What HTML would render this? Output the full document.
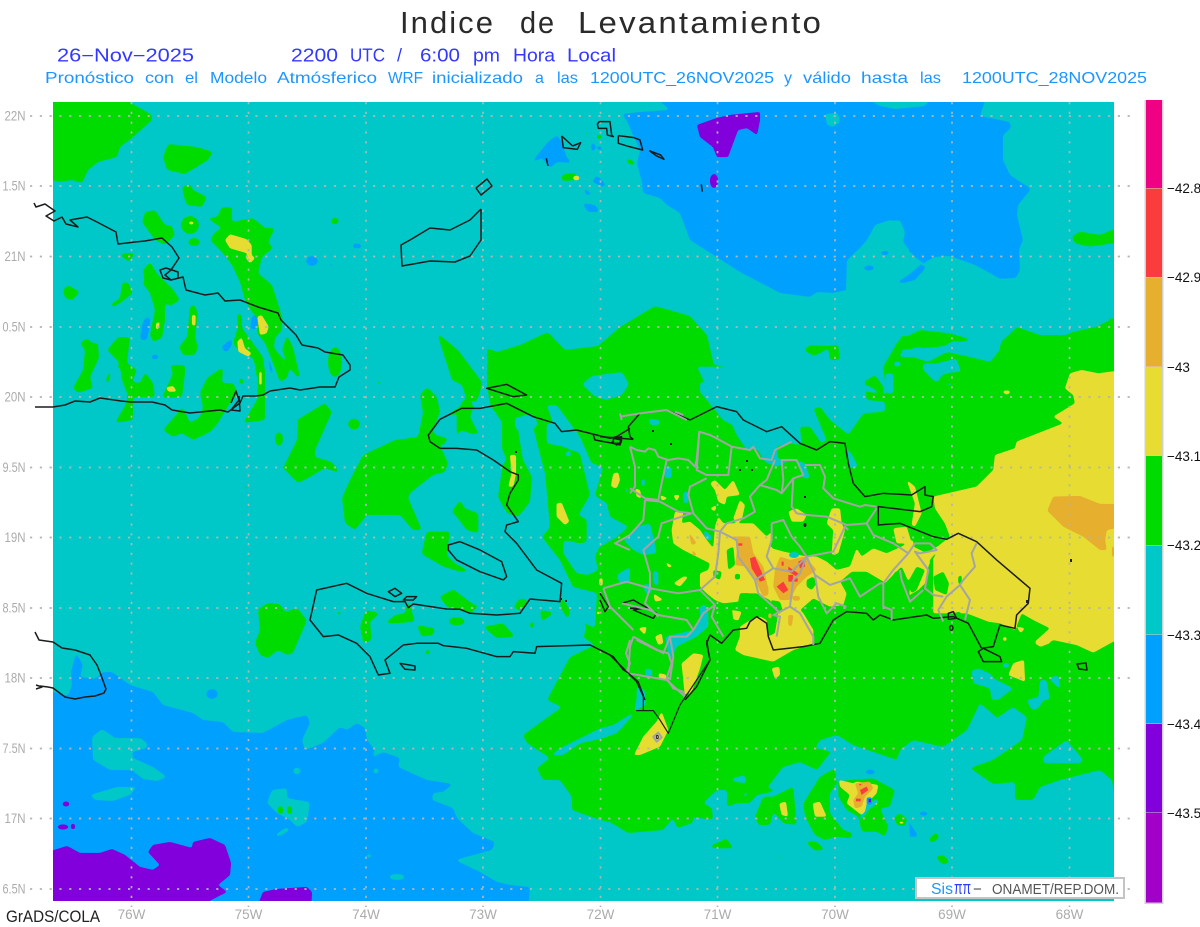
<!DOCTYPE html>
<html><head><meta charset="utf-8"><title>Indice de Levantamiento</title>
<style>
html,body{margin:0;padding:0;background:#fff;width:1200px;height:927px;overflow:hidden}
svg{display:block}
text{font-family:"Liberation Sans",sans-serif;white-space:pre}
.ax{font-size:13.5px;fill:#ababab}
.cb{font-size:13.5px;fill:#111}
.ns{vector-effect:non-scaling-stroke}
</style></head><body>
<svg width="1200" height="927" viewBox="0 0 1200 927" xmlns="http://www.w3.org/2000/svg">
<defs><clipPath id="p"><rect x="53" y="102" width="1061" height="799"/></clipPath>
<filter id="s" filterUnits="userSpaceOnUse" x="0" y="60" width="1200" height="880" color-interpolation-filters="sRGB"><feGaussianBlur stdDeviation="1.7"/><feComponentTransfer><feFuncA type="linear" slope="7" intercept="-3"/></feComponentTransfer></filter>
<filter id="t" filterUnits="userSpaceOnUse" x="0" y="60" width="1200" height="880" color-interpolation-filters="sRGB"><feGaussianBlur stdDeviation="1"/><feComponentTransfer><feFuncA type="linear" slope="6" intercept="-2.3"/></feComponentTransfer></filter>
</defs>
<rect width="1200" height="927" fill="#fff"/>
<g clip-path="url(#p)">
<rect x="53" y="102" width="1061" height="799" fill="#00c8c8"/>

<!-- blue -->
<g fill="#00a0ff" filter="url(#s)">
<polygon points="653,95 670,110 640,112 622,114 628,123 632,133 640,150 637,163 642,183 643,193 660,198 667,205 680,213 690,240 740,272 780,293 810,297 817,292 833,293 847,290 847,260 860,248 867,240 875,225 885,222 900,220 905,232 903,242 913,255 925,265 917,268 900,282 915,278 925,270 925,262 935,257 950,256 975,265 988,272 1000,279 1016,278 1020,270 1019,250 1023,240 1017,215 1018,205 1031,189 1010,175 1003,160 1003,135 1011,128 1010,122 980,116 987,95"/>
<polygon points="531,163 547,143 557,135 562,143 567,158 573,163 557,162 550,168 542,158"/>
<polygon points="597,175 606,185 603,187 592,182"/><polygon points="583,187 593,195 586,195"/><polygon points="582,203 595,205 600,212 588,212"/>
<polygon points="597,145 606,150 597,150"/><ellipse cx="593" cy="147" rx="2" ry="5"/>
<polygon points="45,690 68,696 72,685 71,672 76,653 83,665 80,677 95,679 103,672 112,672 130,685 153,692 163,705 193,713 203,720 223,722 233,732 263,733 287,720 307,715 310,723 302,740 305,750 323,743 340,727 347,730 357,723 365,728 367,740 375,750 372,758 383,752 400,758 398,767 427,780 453,784 443,792 433,793 432,800 453,808 457,818 473,833 495,842 492,850 455,860 480,872 497,882 510,885 530,887 528,910 45,910"/>
<ellipse cx="212" cy="694" rx="6" ry="5"/>
<ellipse cx="312" cy="261" rx="6" ry="5"/><ellipse cx="357" cy="246" rx="5" ry="2.5"/><ellipse cx="331" cy="265" rx="2" ry="2"/>
<polygon points="145,318 150,317 150,325 147,340 140,340 142,325"/><polygon points="230,340 231,328 232,345 226,353 221,347"/>
<polygon points="267,313 252,316 250,328 255,330"/><polygon points="267,355 270,360 274,375 270,372"/><ellipse cx="155" cy="357" rx="4" ry="2.5"/>
</g>

<!-- cyan over blue -->
<g fill="#00c8c8" filter="url(#s)">
<polygon points="860,95 933,95 925,106 895,109 880,106"/>
<polygon points="825,114 838,113 840,122 833,127 827,125"/>
<polygon points="847,260 868,248 875,225 890,220 898,222 905,235 902,240 903,245 902,250 917,262 907,273 895,282 900,283 917,280 925,268 935,257 950,256 952,260 975,265 1000,279 1016,278 1020,290 900,295 840,300 846,290"/>
<polygon points="92,737 102,729 115,738 140,738 147,743 147,748 132,752 133,758 153,767 167,777 157,781 143,779 132,770 110,770 93,760"/>
<polygon points="90,795 117,787 137,787 130,795 113,801 95,800"/>
<polygon points="267,803 272,790 287,788 287,798 297,800 310,802 307,822 297,827 290,820 277,813"/>
<polygon points="275,835 287,827 290,830 278,837"/>
<ellipse cx="397" cy="877" rx="8" ry="3"/><ellipse cx="297" cy="771" rx="4" ry="3.5"/><ellipse cx="376" cy="771" rx="3" ry="3"/><ellipse cx="369" cy="856" rx="3" ry="2"/>
</g>
<g fill="#00a0ff" filter="url(#t)"><ellipse cx="885" cy="253" rx="4" ry="2"/><ellipse cx="869" cy="268" rx="5" ry="2.5"/><polygon points="910,248 918,250 908,253"/><polygon points="903,283 898,282 913,272 921,264 925,268 915,280"/></g>

<!-- purple -->
<g fill="#8200dc" filter="url(#t)">
<polygon points="697,125 717,118 730,115 760,112 760,120 757,135 747,128 738,130 728,157 717,157 713,147 700,137"/>
<ellipse cx="714" cy="181" rx="4" ry="7"/>
<polygon points="45,853 67,846 80,853 100,853 112,849 125,855 140,867 153,870 160,865 148,852 153,845 170,842 192,848 193,842 210,838 225,845 231,863 230,875 218,885 227,892 217,897 193,910 45,910"/>
<polygon points="256,910 263,892 277,889 307,887 312,892 311,910"/>
<ellipse cx="66" cy="804" rx="3.5" ry="2.5"/><ellipse cx="63" cy="827" rx="5.5" ry="2.5"/><rect x="71" y="824" width="4" height="5"/>
</g>

<!-- green -->
<g fill="#00dc00" filter="url(#s)">
<polygon id="main" points="487,348 497,352 520,345 548,332 565,350 598,346 620,327 655,306 690,316 707,335 714,365 887,395 883,367 897,343 905,333 908,322 927,322 937,332 952,332 960,333 977,343 953,341 943,347 930,349 917,347 900,353 900,357 913,357 928,362 947,352 970,357 990,362 1000,350 1000,343 1017,327 1040,335 1067,335 1083,325 1113,318 1125,318 1125,800 1114,795 1112,780 1100,770 1060,780 1040,787 1033,800 1015,800 1015,782 993,784 970,768 993,760 1022,740 1027,717 1013,707 997,718 980,703 967,730 943,747 913,740 900,750 897,760 853,745 837,735 820,740 815,748 833,752 845,753 830,753 817,770 800,762 783,767 767,788 777,790 767,793 757,795 750,803 737,803 727,807 727,790 717,790 703,803 712,808 713,820 693,817 693,823 677,828 673,818 663,830 628,833 610,822 600,820 572,810 572,797 560,780 543,780 537,768 550,758 527,743 523,735 562,707 547,700 563,670 570,657 595,645 583,637 595,627 597,593 573,587 560,560 542,537 550,527 545,473 533,427 518,430 523,460 532,477 530,502 518,517 507,513 498,497 502,470 502,422 490,405 487,385"/>
<polygon points="437,333 458,350 482,382 478,402 470,400 476,435 460,430 458,438 458,420 470,410 462,385 452,380"/>
<polygon points="45,95 117,95 152,115 152,120 132,138 120,147 117,157 98,162 88,170 82,183 72,180 58,182 45,177"/>
<polygon points="163,157 168,144 197,147 213,152 208,160 185,174 167,170"/>
<polygon points="182,187 190,184 193,190 207,197 202,207 187,205 184,197"/>
<ellipse cx="190" cy="225" rx="9" ry="9"/><ellipse cx="194" cy="242" rx="6" ry="4"/>
<polygon points="207,218 217,217 222,207 232,207 232,222 253,218 265,228 275,228 268,242 273,248 262,257 258,273 272,285 280,310 283,320 275,338 270,338 265,326 252,312 245,300 240,282 232,265 222,252 210,240 215,232 222,228"/>
<ellipse cx="335" cy="221" rx="4" ry="3.5"/>
<polygon points="145,212 155,210 165,225 172,226 175,235 165,245 155,240 142,222"/>
<polygon points="125,253 135,253 129,262 120,255"/><polygon points="143,270 150,262 158,275 172,288 180,300 170,306 158,297 145,285"/>
<g transform="translate(500 100) scale(.3333)"><polygon points="185,225 222,218 230,225 235,240 185,243"/><rect x="252" y="96" width="16" height="8" rx="4"/><ellipse cx="298" cy="110" rx="9" ry="8"/><polygon points="378,175 395,180 408,190 395,196 380,186"/><rect x="378" y="288" width="12" height="8"/></g>
<polygon points="63,290 68,285 80,292 72,300 65,298"/>
<polygon points="110,305 120,298 122,283 128,282 133,293 120,303 113,307"/>
<polygon points="140,280 158,293 165,300 165,320 162,338 153,342 150,335 155,310 150,293"/>
<polygon points="190,307 194,304 198,313 195,337 198,347 195,355 183,355 179,347 187,337"/>
<polygon points="80,343 87,338 92,343 98,343 99,358 90,377 93,388 78,393 73,388 83,370 85,350"/>
<polygon points="107,350 118,337 130,337 127,363 137,370 132,382 140,383 145,372 153,383 155,397 133,397 133,413 133,420 115,423 127,402 127,393 122,380 120,367 112,370 107,388 106,378 112,368 120,365 117,360"/>
<polygon points="162,397 170,380 173,373 170,365 185,365 185,373 182,397 167,398"/>
<polygon points="163,430 182,408 183,407 190,423 200,417 203,407 200,393 207,378 223,367 222,383 233,383 238,393 230,403 218,423 210,432 193,440 182,433 173,437"/>
<polygon points="238,380 243,377 243,387"/>
<polygon points="255,370 265,370 265,420 243,423 257,400 258,380"/>
<polygon points="237,313 242,315 242,328 263,357 265,373 257,373 253,358 238,350 233,343 238,327"/>
<polygon points="260,313 282,320 282,330 275,338 274,348 290,367 287,378 280,382 273,363 265,343 257,333 257,320"/>
<polygon points="287,335 293,347 300,377 298,378 290,368 282,350"/>
<ellipse cx="335" cy="362" rx="7" ry="15"/>
<polygon points="297,420 325,403 332,412 315,450 315,457 332,462 340,473 325,468 308,478 298,483 283,468 297,440 298,423"/>
<ellipse cx="354" cy="424" rx="6" ry="5.5"/><ellipse cx="279" cy="439" rx="4" ry="7"/><ellipse cx="246" cy="487" rx="3" ry="1.5"/>
<polygon points="342,498 350,480 363,455 395,440 418,437 423,413 420,395 427,387 437,397 440,412 433,430 448,463 445,472 433,475 410,493 408,498 422,530 413,530 400,515 367,515 355,530 345,523"/>
<polygon points="258,610 267,603 280,604 285,612 297,608 307,620 293,653 287,655 278,650 268,658 260,655 255,643 260,630"/>
<g transform="translate(280 380) scale(.3333)">
<polygon points="515,395 540,360 555,385 595,400 595,460 560,450 530,410"/>
<polygon points="425,520 440,455 510,455 500,525 525,550 570,575 540,575 490,560 430,525"/>
<polygon points="478,650 520,628 575,670 597,680 570,700 500,680"/><ellipse cx="530" cy="724" rx="25" ry="12"/>
<polygon points="410,735 465,745 460,765 425,770"/><polygon points="610,740 670,730 705,770 650,775"/>
<polygon points="700,680 720,655 745,660 720,695"/><polygon points="780,690 810,695 820,700 785,725"/><rect x="750" y="725" width="12" height="20" rx="5"/>
<polygon points="845,650 870,690 865,720 840,680"/><polygon points="258,690 300,700 270,725 275,780 250,790 240,740"/>
<polygon points="315,730 345,705 375,700 385,660 405,725 350,730"/><polygon points="435,810 455,810 440,830"/>
<rect x="170" y="695" width="14" height="10"/><rect x="205" y="735" width="10" height="8"/><polygon points="275,580 288,612 278,605"/>
<polygon points="465,165 505,175 490,195 465,190"/><polygon points="530,175 545,125 570,120 590,160 615,150 595,100 565,55 550,60 540,80 480,118 530,100"/>
<polygon points="288,0 310,8 295,15"/>
<polygon points="905,715 925,735 945,745 940,770 910,770 920,745"/>
</g>
<g transform="translate(780 100) scale(.3333)">
<polygon points="245,850 285,825 310,860 310,885 270,860"/>
<polygon points="72,750 90,735 135,738 175,735 180,780 150,780 145,745 110,765 95,765"/>
<polygon points="875,410 900,395 960,405 1030,375 1030,425 930,440 885,430"/><rect x="175" y="728" width="15" height="4"/><rect x="275" y="762" width="18" height="5"/>
</g>
<g transform="translate(500 640) scale(.3333)">
<polygon points="765,530 790,470 820,470 880,440 890,555 850,550 820,515 810,555 775,555"/>
<polygon points="910,490 960,410 1005,385 1010,430 990,460 990,520 1030,570 1060,580 1050,595 1010,590 975,600 945,585 915,530"/>
<polygon points="1015,425 1050,420 1120,415 1185,450 1170,500 1140,505 1165,560 1155,590 1130,575 1085,575 1075,530 1040,510 1015,470"/>
<polygon points="1182,530 1200,520 1222,535 1215,558 1190,555"/>
<polygon points="915,605 950,605 975,630 945,632"/><polygon points="605,632 625,635 620,645"/><polygon points="625,620 660,605 680,595 700,625 650,625"/>
<polygon points="825,645 845,650 850,660 835,655"/><rect x="855" y="660" width="15" height="6"/><rect x="880" y="672" width="17" height="6"/>
<polygon points="1285,600 1310,575 1318,595 1295,608"/><polygon points="1305,650 1330,645 1350,665 1330,675"/>
</g>
<rect x="278" y="806" width="5" height="8"/><rect x="287" y="806" width="5" height="8"/>
</g>

<!-- cyan holes in green -->
<g fill="#00c8c8" filter="url(#s)">
<g transform="translate(280 380) scale(.3333)">
<polygon points="800,75 830,75 900,170 935,250 970,260 945,345 985,410 1000,420 1000,470 960,495 945,530 955,570 925,585 890,580 850,520 850,480 900,490 950,480 960,440 895,405 930,345 900,220 850,200 800,190 800,130 820,130"/>
<polygon points="610,0 640,100 660,120 660,190 680,240 640,290 620,250 610,190 590,150 570,110 585,70 600,40"/>
<polygon points="510,120 528,125 525,145 510,140"/><polygon points="705,110 720,112 725,165 705,140"/><circle cx="865" cy="222" r="9"/>
<polygon points="755,100 775,130 750,160 720,150 720,110"/>
</g>
<polygon points="600,500 606,502 610,517 628,527 617,537 600,547"/>
<polygon points="582,384 592,376 606,374 622,372 629,384 622,395 606,400 594,396"/>
<polygon points="700,380 715,397 728,410 738,412 733,423 738,437 755,435 760,450 777,448 778,460 792,458 800,462 805,463 810,478 803,478 798,463 790,460 777,467 765,462 755,445 745,442 738,428 723,420 715,410 700,392"/>
<g transform="translate(600 380) scale(.3333)">
<polygon points="300,-40 345,50 385,95 415,160 465,165 480,210 530,205 535,240 575,235 600,245 615,250 630,295 610,295 595,250 570,240 530,240 480,205 440,210 410,165 380,95 340,60 290,-40"/>
<polygon points="300,-40 790,-40 800,60 855,65 855,95 790,100 745,165 740,160 690,120 660,80 640,85 680,180 665,190 630,140 600,140 605,195 570,190 530,200 480,210 415,160"/>
<polygon points="740,195 775,260 750,265"/>
<polygon points="855,-20 880,-20 880,40 860,40"/>
<polygon points="-40,360 -10,350 20,370 30,410 85,440 50,470 -10,505 -40,500"/><polygon points="110,440 150,430 165,490 170,520 130,525 100,510 70,480"/>
<polygon points="145,115 180,120 178,135 150,135"/><polygon points="190,260 215,260 215,295 195,295"/><polygon points="125,295 135,295 135,320 125,320"/>
<polygon points="245,290 255,290 255,305"/><polygon points="70,325 85,325 85,345"/><polygon points="250,335 265,335 265,370 250,370"/>
<polygon points="310,445 335,470 335,482 315,480"/><polygon points="160,570 175,575 175,620 160,610"/><polygon points="50,585 90,560 90,610 60,612"/><polygon points="130,610 155,615 155,640 135,640"/>
<polygon points="300,680 315,670 325,700 325,740 290,770 230,800 210,850 195,770 280,750 300,720"/>
<polygon points="110,920 135,930 135,980 110,980"/><polygon points="135,865 155,868 155,890 135,885"/>
<polygon points="1115,870 1140,865 1190,900 1240,925 1195,960 1175,960 1170,925 1120,910"/><polygon points="1320,900 1340,900 1350,960 1315,960"/><ellipse cx="1218" cy="856" rx="12" ry="6"/>
</g>
<g transform="translate(780 100) scale(.3333)">
<polygon points="430,790 460,790 480,840 465,845 430,810"/><polygon points="490,790 525,778 545,815 495,820"/><ellipse cx="352" cy="792" rx="12" ry="8"/><ellipse cx="507" cy="853" rx="12" ry="4"/><polygon points="315,840 332,830 340,880 315,875"/>
</g>
<g transform="translate(500 640) scale(.3333)">
<polygon points="135,348 190,345 240,310 300,297 350,280 400,225 415,150 420,205 340,255 300,265 230,300 180,325 150,348"/>
<polygon points="695,415 735,405 740,430 700,425"/><polygon points="725,470 745,450 745,460 735,472"/>
<polygon points="1075,550 1090,495 1135,475 1135,490 1110,505 1095,525"/><polygon points="438,85 458,88 455,112 440,110"/>
</g>
<g transform="translate(900 320) scale(.3333)">
<polygon points="430,1310 500,1260 550,1320 540,1330 430,1330"/><polygon points="445,1075 475,1065 482,1110"/><polygon points="380,1140 420,1130 425,1080 445,1120 415,1165 395,1170"/>
<polygon points="0,-10 150,-10 600,-10 640,-5 590,20 500,40 420,45 350,20 310,50 300,80 270,125 210,80 160,65 130,90 70,120 -10,90 60,85 120,80 180,65 220,60 150,40 60,30 20,50 -10,45"/>
<polygon points="65,140 110,130 170,115 180,150 125,165 115,185 80,160"/><polygon points="140,190 160,190 155,198"/><ellipse cx="318" cy="1036" rx="10" ry="8"/>
<polygon points="240,1050 215,1065 225,1090 270,1100 290,1135 345,1105 300,1100 270,1060"/>
</g>
</g>

<!-- yellow -->
<g fill="#e6dc32" filter="url(#t)">
<g transform="translate(900 320) scale(.3333)">
<polygon points="670,150 595,160 545,150 510,160 495,205 520,225 525,250 460,290 490,310 350,365 345,385 285,405 280,450 230,500 100,530 105,565 135,610 150,650 100,690 100,880 200,880 265,905 300,910 345,930 365,880 400,900 450,925 405,965 425,980 460,960 530,975 580,998 640,965 670,950"/>
<polygon points="350,1040 372,1020 375,1085 350,1075 325,1065"/><polygon points="310,212 332,215 320,225"/><ellipse cx="314" cy="957" rx="5" ry="6"/><polygon points="350,920 375,925 362,940"/>
</g>
<g transform="translate(600 380) scale(.3333)">
<polygon points="215,450 225,395 250,395 245,430 270,425 300,450 320,480 340,505 345,440 355,410 370,430 410,430 460,430 500,470 515,455 515,505 550,515 620,530 650,530 680,545 710,570 750,560 770,505 785,530 820,505 860,520 905,500 940,480 940,500 980,520 1010,500 985,560 975,610 955,630 920,650 905,600 890,570 860,610 800,575 755,575 720,605 740,640 730,675 690,680 640,655 600,690 610,700 640,750 640,790 580,810 520,845 430,825 405,810 420,770 420,740 460,715 480,710 500,720 505,770 525,760 535,700 510,660 470,640 430,640 415,665 370,670 345,660 320,640 300,620 300,580 325,570 330,550 290,530 250,510 220,490"/>
<polygon points="330,310 345,300 375,330 400,300 420,345 380,350 375,375 355,365 345,330"/>
<polygon points="400,415 420,360 435,375 425,420 410,430"/>
<polygon points="35,315 50,280 60,300 50,325"/><polygon points="105,325 120,330 125,355 110,350"/>
<polygon points="180,345 205,355 185,362"/><polygon points="220,345 240,345 230,365"/>
<polygon points="565,395 590,385 620,405 610,425 575,425"/>
<polygon points="695,385 720,385 725,430 735,450 715,520 695,525 700,450 680,430"/>
<polygon points="920,300 945,320 965,400 945,440 935,435 945,370"/><polygon points="880,445 920,440 935,490 890,490"/>
<polygon points="392,690 425,695 415,722 400,718"/><polygon points="515,865 538,860 540,885 525,897"/>
<rect x="1210" y="32" width="20" height="9" rx="4"/>
<polygon points="1240,850 1270,840 1275,905 1225,885"/><polygon points="1305,790 1350,755 1350,790 1320,800"/>
<polygon points="165,770 185,760 190,790 175,795"/><polygon points="115,745 140,740 135,765"/><polygon points="160,640 190,660 165,665"/>
<polygon points="250,590 265,590 240,620 220,610"/><polygon points="195,545 220,560 205,562"/><polygon points="330,385 350,375 345,395"/>
<polygon points="245,850 270,845 280,820 310,825 285,890 255,950"/><polygon points="175,880 200,885 195,900"/>
<rect x="1210" y="772" width="10" height="10"/>
</g>
<g transform="translate(280 380) scale(.3333)">
<polygon points="690,225 708,225 708,280 700,320 685,320 695,280"/><polygon points="830,370 845,368 868,425 855,435 830,410"/><polygon points="1000,280 1015,277 1020,300 1005,325 993,318"/><rect x="958" y="595" width="10" height="22"/><rect x="950" y="695" width="10" height="8"/>
</g>
<g transform="translate(30 280) scale(.3333)">
<polygon points="682,110 695,105 716,140 710,160 690,165"/><polygon points="622,185 635,172 645,205 665,220 655,230 625,215"/><polygon points="408,322 430,318 440,335 415,335"/><polygon points="378,130 390,125 385,148 378,148"/><polygon points="486,105 497,105 496,138 486,135"/><rect x="688" y="275" width="7" height="40"/>
</g>
<g transform="scale(.3333)">
<polygon points="675,720 690,703 740,718 755,735 755,765 765,775 750,790 738,775 742,760 690,745"/><rect x="567" y="665" width="14" height="8"/>
</g>
<g transform="translate(500 100) scale(.3333)"><ellipse cx="229" cy="234" rx="10" ry="7"/></g>
<g transform="translate(500 640) scale(.3333)">
<polygon points="402,345 430,290 470,245 485,215 505,270 480,320 420,345"/><polygon points="545,70 580,40 610,45 600,85 570,170 550,110"/><polygon points="475,100 495,103 500,120 478,115"/>
<polygon points="838,490 858,485 864,530 845,525"/><polygon points="938,490 960,485 980,530 945,530"/>
<polygon points="1017,420 1060,430 1070,425 1135,435 1130,460 1100,490 1095,515 1085,525 1040,490 1050,465 1020,440"/>
<rect x="1197" y="545" width="15" height="6"/><rect x="1125" y="488" width="8" height="7"/>
</g>
</g>

<!-- green holes over yellow -->
<g filter="url(#t)">
<g fill="#00dc00" transform="translate(600 380) scale(.3333)">
<polygon points="640,590 650,610 635,630 620,620 620,600"/><polygon points="340,570 365,575 360,600 340,590"/><rect x="405" y="582" width="15" height="16"/>
<polygon points="510,660 540,665 550,700 525,685"/><polygon points="420,640 450,640 445,680 430,700 415,665"/><polygon points="365,690 395,680 400,725 365,725"/>
<polygon points="380,510 400,500 405,555 385,570"/><polygon points="1000,590 1030,575 1047,610 1040,645 1005,630"/><polygon points="880,585 905,560 925,605 930,660 860,670 855,610"/>
<polygon points="990,540 1005,520 1010,520 985,560"/><polygon points="1075,590 1085,585 1085,615 1075,610"/>
<polygon points="950,560 975,570 950,630 935,640 925,605"/><polygon points="780,580 850,610 840,680 760,680 730,620"/><polygon points="590,450 650,410 680,440 695,515 620,525 580,470"/><polygon points="520,420 570,430 560,510 510,500"/>
<polygon points="1015,710 1080,695 1090,715 1050,730"/>
</g></g>
<ellipse cx="794" cy="555" rx="5" ry="3" fill="#00c8c8"/>

<!-- orange -->
<g fill="#e6af2d" filter="url(#t)">
<g transform="translate(600 380) scale(.3333)">
<polygon points="390,470 450,470 460,520 490,560 505,630 490,650 470,610 440,560 405,555 415,490"/>
<polygon points="540,530 570,540 615,530 650,570 620,590 590,620 570,660 540,660 520,620 525,570"/>
<polygon points="265,455 290,490 275,495"/><polygon points="275,505 290,525 280,530"/><polygon points="565,705 580,705 575,740 565,735"/><rect x="578" y="648" width="22" height="14" rx="5"/><polygon points="480,610 505,620 505,645 490,650"/>
<rect x="505" y="700" width="10" height="15"/>
</g>
<g transform="translate(900 320) scale(.3333)"><polygon points="442,572 460,530 540,528 600,552 670,552 670,620 620,630 615,660 620,690 600,690 550,650 490,620"/><rect x="636" y="680" width="30" height="30"/></g>
<g transform="translate(500 640) scale(.3333)"><polygon points="1065,430 1110,425 1120,445 1095,470 1085,500 1065,505 1060,480 1075,460"/></g>
</g>
<!-- red -->
<g fill="#fa3c3c">
<g transform="translate(600 380) scale(.3333)">
<polygon points="450,535 465,530 495,600 480,605 455,565"/><rect x="415" y="490" width="12" height="7"/>
<polygon points="565,560 595,580 590,590 565,575"/><polygon points="595,545 615,535 615,560 600,565"/><polygon points="530,620 550,605 565,630 550,640"/><rect x="565" y="585" width="14" height="20"/><rect x="583" y="595" width="10" height="10"/><rect x="545" y="545" width="6" height="12"/>
</g>
<g transform="translate(500 640) scale(.3333)"><polygon points="1080,450 1100,440 1105,450 1085,465"/><rect x="1068" y="476" width="14" height="8"/><rect x="1078" y="432" width="6" height="4"/></g>
</g>
<g transform="translate(500 640) scale(.3333)"><rect x="1100" y="472" width="16" height="22" rx="6" fill="#00a0ff"/><rect x="1106" y="477" width="7" height="10" fill="#8200dc"/><ellipse cx="1111" cy="396" rx="13" ry="7" fill="#00a0ff"/><polygon points="1228,548 1250,580 1250,590 1230,590" fill="#00a0ff"/><ellipse cx="1271" cy="521" rx="11" ry="6" fill="#00a0ff"/></g>
</g>

<!-- grid -->
<g stroke="#b4b4b4" stroke-width="1.700" stroke-dasharray="2.200 7.600" fill="none">
<path d="M30 116H1133M30 186H1133M30 256.5H1133M30 327H1133M30 397H1133M30 467.5H1133M30 537.5H1133M30 608H1133M30 678H1133M30 748.5H1133M30 818.5H1133M30 889H1133"/>
<path d="M131.500 102V907M248.500 102V907M366 102V907M483 102V907M600.500 102V907M717.500 102V907M835 102V907M952 102V907M1069.500 102V907"/>
</g>

<!-- coast -->
<g fill="none" stroke="#1c1c1c" stroke-width="1.5" stroke-linejoin="round">
<polyline class="ns" points="34,203 36,207 45,204 55,211 46,216 54,221 62,217 66,224 78,227 70,220 87,217 97,222 116,232 118,244 135,242 145,241 162,238 172,247 179,258 171,270 165,275 171,280 183,277 186,290 205,295 218,293 225,301 240,300 258,307 278,313 281,320 296,335 302,345 318,348 325,352 343,355 350,365 350,370 339,377 335,387 320,387 300,390 290,388 270,391 263,395 256,396 243,396 240,403 228,412 220,410 190,413 172,410 165,405 152,402 131,402 121,401 100,398 90,402 75,401 65,405 53,407 35,407"/>
<polyline class="ns" points="171,280 163,278 160,270 166,268 178,272 178,278"/>
<polyline class="ns" points="231,403 236,391 239,400 231,410 240,411 239,396"/>
<polyline class="ns" points="35,632 39,640 53,642 62,648 75,650 90,655 97,665 101,675 106,689 104,693 95,696 85,697 75,699 65,697 53,688 48,687 40,686"/>
<polyline class="ns" points="36,685 42,687 36,689"/>
<polyline class="ns" points="476,188 487,179 492,186 481,195 476,188"/>
<polyline class="ns" points="481,209 481,240 470,256 455,262 430,261 402,266 401,245 410,240 430,228 450,230 470,220 481,209"/>
<g transform="translate(500 100) scale(.3333)">
<polyline class="ns" points="185,108 190,143 232,148 242,128 218,138"/><polyline class="ns" points="185,108 218,138"/>
<polyline class="ns" points="292,72 298,65 330,65 335,105 340,110 322,105 320,85 295,85 292,72"/>
<polyline class="ns" points="355,107 402,113 420,120 428,150 388,140 355,130 355,107"/>
<polyline class="ns" points="448,152 482,165 492,178 470,168 448,152"/>
<polyline class="ns" points="139,175 144,198"/><polyline class="ns" points="604,253 607,275"/>
</g>
<g transform="translate(280 380) scale(.3333)">
<polyline class="ns" points="1050,145 1010,170 990,175 950,165 890,150 845,155 825,130 760,110 680,70 600,85 545,85 480,118 445,165 450,185 480,205 530,205 590,210 640,240 690,275 715,285 715,300 690,340 680,375 715,425 680,435 675,455 710,490 770,570 845,610 840,665 750,657 720,700 650,705 570,700 540,688 500,687 400,672 385,683 375,665 340,665 260,640 200,610 110,630 90,720 130,770 175,765 230,790 270,830 295,885 330,880 315,840 370,795 410,790 475,790 490,797 560,805 650,830 690,830 700,815 765,820 770,800 930,795 1000,830 1030,870 1050,880"/>
<polygon class="ns" points="505,495 540,485 600,510 665,545 680,590 670,600 600,575 530,540 505,510"/>
<polygon class="ns" points="620,25 680,13 740,45 700,50"/>
<polygon class="ns" points="325,635 345,625 365,640 345,650"/><polygon class="ns" points="380,650 410,650 400,660 370,660"/>
<polygon class="ns" points="360,850 405,858 405,870 375,868"/>
<polyline class="ns" points="940,165 945,180 1000,190 1020,190 1025,170 1000,175"/>
<polyline class="ns" points="995,185 1010,195 1025,185"/>
</g>
<g transform="translate(600 380) scale(.3333)">
<polyline class="ns" points="0,170 100,178"/><polyline class="ns" points="85,140 120,100 200,90 270,120 330,90 350,80 410,95 430,120 500,155 545,140 600,190 650,210 690,185 735,190 745,250 760,310 795,350 850,340 935,345 975,320 975,345 1000,350 995,380 960,395 835,380 835,435 900,430 1000,470 1040,478 1075,460 1130,485 1190,540 1290,625 1285,670 1250,705 1245,745 1200,735 1180,800 1145,805 1105,730 1060,710 1000,715 980,705 880,720 840,705 820,720 800,700 740,695 700,720 660,790 610,800 520,810 505,770 500,730 470,710 450,725 440,745 400,750 365,790 330,765 320,790 330,840 290,920 255,960"/>
<polyline class="ns" points="85,140 90,170 100,178"/>
<polyline class="ns" points="0,810 30,825 70,865 110,905 135,960"/>
<polygon class="ns" points="1135,815 1150,805 1200,830 1205,845 1150,845"/>
<polygon class="ns" points="1045,700 1060,695 1070,715 1045,718"/><ellipse class="ns" cx="1054" cy="744" rx="5" ry="7"/>
<polyline class="ns" points="65,670 100,660 170,700 160,715 100,690 130,685 90,685"/>
<polyline class="ns" points="0,640 25,680 15,695 0,660"/>
<polyline class="ns" points="40,175 65,180 60,195 40,190 40,175"/>
</g>
<polygon class="ns" points="1077,664 1086,663 1087,670 1079,669"/>
</g>
<!-- small dark specks -->
<g fill="#222">
<rect x="652" y="430" width="2" height="2"/><rect x="670" y="443" width="2" height="2"/><rect x="746" y="460" width="2" height="2"/><rect x="739" y="469" width="2" height="2"/><rect x="751" y="469" width="2" height="2"/><rect x="804" y="496" width="2" height="2"/><rect x="1070" y="559" width="2" height="3"/><rect x="1026" y="600" width="2" height="3"/><ellipse cx="805" cy="525" rx="1.500" ry="2"/><rect x="515" y="451" width="2" height="2"/><rect x="565" y="600" width="2" height="2"/><rect x="560" y="598" width="2" height="2"/>
</g>
<!-- provinces -->
<g transform="translate(600 380) scale(.3333)" fill="none" stroke="#a4a4a4" stroke-width="2" stroke-linejoin="round">
<polyline class="ns" points="60,110 120,100 200,90 260,120"/>
<polyline class="ns" points="90,200 110,210 135,215 145,205 165,210 175,230 205,240 235,235 265,240 285,260 290,240 298,155 330,165 350,175 395,200 450,210 460,200 480,235 515,240 525,210 575,185"/>
<polyline class="ns" points="298,155 290,270 320,285 385,285 395,200"/>
<polyline class="ns" points="525,240 500,300 480,315 450,350 465,395 430,415 380,430 360,455 320,445 280,400 265,345 270,320 320,295"/>
<polyline class="ns" points="200,240 185,310 175,360 135,355 90,325"/>
<polyline class="ns" points="135,360 180,365 235,395 275,400"/>
<polyline class="ns" points="480,315 530,330 545,340 580,295 610,285 590,240 545,240 550,300 545,340"/>
<polyline class="ns" points="615,255 660,255 675,290 670,325 700,355 780,380 795,375 830,380"/>
<polyline class="ns" points="580,295 575,380 590,400 620,405 680,410 740,435 800,430 830,385"/>
<polyline class="ns" points="800,430 820,465 880,490 925,520 880,570 850,610 850,680 875,690 875,720"/>
<polyline class="ns" points="925,520 945,490 990,490 1010,510 960,520 945,515 985,570 975,625 1000,645 1030,650"/>
<polyline class="ns" points="900,570 905,600 930,665 970,630"/>
<polyline class="ns" points="1130,490 1115,520 1125,560 1090,600 1080,615 1110,660 1095,720"/>
<polyline class="ns" points="1080,615 1040,650 1015,690 1030,725"/>
<polyline class="ns" points="515,430 550,420 575,470 600,500 620,530 700,515 735,440 745,450"/>
<polyline class="ns" points="515,430 515,480 500,530 520,565 575,575 620,530 600,580 580,600 570,680 520,705 540,710 530,770"/>
<polyline class="ns" points="620,530 645,585 690,615 750,595 780,650 840,610 850,610"/>
<polyline class="ns" points="645,585 655,650 680,700 710,670 740,680"/>
<polyline class="ns" points="570,680 600,700 640,770 640,795"/>
<polyline class="ns" points="520,565 465,600 475,640 520,680 540,700"/>
<polyline class="ns" points="360,455 410,480 415,530 465,600"/>
<polyline class="ns" points="360,455 355,520 350,555 345,590 300,630 235,640 150,625 80,605 10,625"/>
<polyline class="ns" points="300,630 345,675 335,710 370,770"/>
<polyline class="ns" points="345,675 310,700 280,750 260,770 210,770 190,820 100,770"/>
<polyline class="ns" points="275,400 215,420 185,430 175,470 130,510 150,580 150,625 135,670 175,710"/>
<polyline class="ns" points="135,360 130,420 90,465 45,490 90,510"/>
<polyline class="ns" points="100,770 90,800 85,880 200,900 255,950"/>
<polyline class="ns" points="210,770 220,830 210,900"/>
<polyline class="ns" points="65,670 150,690 175,705 260,720 280,750"/>
<polyline class="ns" points="10,625 30,680 60,710 100,750"/>
<polyline class="ns" points="90,200 105,260 105,320 90,340"/>
<polyline class="ns" points="60,100 65,120"/>
<polyline class="ns" points="225,95 250,105"/>
</g>
<g transform="translate(500 640) scale(.3333)" fill="none" stroke-linejoin="round">
<polyline class="ns" stroke="#a4a4a4" stroke-width="2" points="390,0 378,40 390,70 380,95"/>
<polyline class="ns" stroke="#a4a4a4" stroke-width="2" points="410,0 470,30 505,40 515,70 500,115 520,145 550,155 555,175"/>
<polygon class="ns" stroke="#a4a4a4" stroke-width="2" points="460,290 475,278 485,292 470,305"/>
<polyline class="ns" stroke="#222" stroke-width="1.200" points="372,88 415,125 430,165 430,212 410,212 460,212 480,240 505,280 540,195 630,60 620,0"/>
<ellipse class="ns" cx="472" cy="291" rx="3" ry="5" stroke="#222" stroke-width="1"/>
</g>

<!-- axis text -->
<g class="ax" text-anchor="end">
<text x="25.500" y="120.500" textLength="21" lengthAdjust="spacingAndGlyphs">22N</text>
<text x="25.500" y="190.500" textLength="23" lengthAdjust="spacingAndGlyphs">1.5N</text>
<text x="25.500" y="261" textLength="21" lengthAdjust="spacingAndGlyphs">21N</text>
<text x="25.500" y="331.500" textLength="23" lengthAdjust="spacingAndGlyphs">0.5N</text>
<text x="25.500" y="401.500" textLength="21" lengthAdjust="spacingAndGlyphs">20N</text>
<text x="25.500" y="472" textLength="23" lengthAdjust="spacingAndGlyphs">9.5N</text>
<text x="25.500" y="542" textLength="21" lengthAdjust="spacingAndGlyphs">19N</text>
<text x="25.500" y="612.500" textLength="23" lengthAdjust="spacingAndGlyphs">8.5N</text>
<text x="25.500" y="682.500" textLength="21" lengthAdjust="spacingAndGlyphs">18N</text>
<text x="25.500" y="753" textLength="23" lengthAdjust="spacingAndGlyphs">7.5N</text>
<text x="25.500" y="823" textLength="21" lengthAdjust="spacingAndGlyphs">17N</text>
<text x="25.500" y="893.500" textLength="23" lengthAdjust="spacingAndGlyphs">6.5N</text>
</g>
<g text-anchor="middle" class="ax">
<text x="131.500" y="919">76W</text><text x="248.500" y="919">75W</text><text x="366" y="919">74W</text><text x="483" y="919">73W</text><text x="600.500" y="919">72W</text><text x="717.500" y="919">71W</text><text x="835" y="919">70W</text><text x="952" y="919">69W</text><text x="1069.500" y="919">68W</text>
</g>

<!-- titles -->
<g font-size="30.500" fill="#2a2a2a" style="letter-spacing:2px">
<text x="400" y="33" textLength="95" lengthAdjust="spacingAndGlyphs">Indice</text>
<text x="520" y="33" textLength="36" lengthAdjust="spacingAndGlyphs">de</text>
<text x="578" y="33" textLength="245" lengthAdjust="spacingAndGlyphs">Levantamiento</text>
</g>
<g font-size="18" fill="#3338ff">
<text x="57" y="61.500" textLength="137" lengthAdjust="spacingAndGlyphs">26−Nov−2025</text>
<text x="291" y="61.500" textLength="47" lengthAdjust="spacingAndGlyphs">2200</text>
<text x="350" y="61.500" textLength="35" lengthAdjust="spacingAndGlyphs">UTC</text>
<text x="397" y="61.500">/</text>
<text x="420" y="61.500" textLength="40" lengthAdjust="spacingAndGlyphs">6:00</text>
<text x="473" y="61.500" textLength="27" lengthAdjust="spacingAndGlyphs">pm</text>
<text x="513" y="61.500" textLength="42" lengthAdjust="spacingAndGlyphs">Hora</text>
<text x="567" y="61.500" textLength="49" lengthAdjust="spacingAndGlyphs">Local</text>
</g>
<g font-size="16" fill="#1c96ff">
<text x="45" y="83" textLength="89" lengthAdjust="spacingAndGlyphs">Pronóstico</text>
<text x="145" y="83" textLength="29" lengthAdjust="spacingAndGlyphs">con</text>
<text x="185" y="83" textLength="13" lengthAdjust="spacingAndGlyphs">el</text>
<text x="210" y="83" textLength="57" lengthAdjust="spacingAndGlyphs">Modelo</text>
<text x="277" y="83" textLength="100" lengthAdjust="spacingAndGlyphs">Atmósferico</text>
<text x="388" y="83" textLength="35" lengthAdjust="spacingAndGlyphs">WRF</text>
<text x="432" y="83" textLength="91" lengthAdjust="spacingAndGlyphs">inicializado</text>
<text x="535" y="83">a</text>
<text x="557" y="83" textLength="21" lengthAdjust="spacingAndGlyphs">las</text>
<text x="590" y="83" textLength="184" lengthAdjust="spacingAndGlyphs">1200UTC_26NOV2025</text>
<text x="784" y="83">y</text>
<text x="803" y="83" textLength="48" lengthAdjust="spacingAndGlyphs">válido</text>
<text x="861" y="83" textLength="47" lengthAdjust="spacingAndGlyphs">hasta</text>
<text x="920" y="83" textLength="21" lengthAdjust="spacingAndGlyphs">las</text>
<text x="962" y="83" textLength="185" lengthAdjust="spacingAndGlyphs">1200UTC_28NOV2025</text>
</g>
<text x="6" y="922" font-size="16.500" fill="#222" textLength="94" lengthAdjust="spacingAndGlyphs">GrADS/COLA</text>

<!-- logo box -->
<rect x="916" y="878" width="208" height="20" fill="#fff" stroke="#c4c4c4" stroke-width="2"/>
<text x="931" y="894" font-size="15.500" fill="#1e96ff" textLength="22" lengthAdjust="spacingAndGlyphs">Sis</text>
<text x="954" y="894" font-size="18" fill="#2c3cff" textLength="17" lengthAdjust="spacingAndGlyphs">ππ</text>
<text x="973" y="894" font-size="15" fill="#444">−</text>
<text x="992" y="894" font-size="15" fill="#555" textLength="127" lengthAdjust="spacingAndGlyphs">ONAMET/REP.DOM.</text>

<!-- colorbar -->
<rect x="1144.500" y="100" width="19" height="804" fill="#d0d0d0"/>
<rect x="1146" y="100" width="16" height="88" fill="#f00082"/>
<rect x="1146" y="188.500" width="16" height="88.500" fill="#fa3c3c"/>
<rect x="1146" y="277.500" width="16" height="89" fill="#e6af2d"/>
<rect x="1146" y="367" width="16" height="88.500" fill="#e6dc32"/>
<rect x="1146" y="456" width="16" height="89" fill="#00dc00"/>
<rect x="1146" y="545.500" width="16" height="89" fill="#00c8c8"/>
<rect x="1146" y="635" width="16" height="88.500" fill="#00a0ff"/>
<rect x="1146" y="724" width="16" height="88.500" fill="#8200dc"/>
<rect x="1146" y="813" width="16" height="89.500" fill="#a000c8"/>
<g class="cb">
<text x="1167" y="193">−42.8</text><text x="1167" y="282">−42.9</text><text x="1167" y="372">−43</text><text x="1167" y="461">−43.1</text><text x="1167" y="550">−43.2</text><text x="1167" y="640">−43.3</text><text x="1167" y="729">−43.4</text><text x="1167" y="818">−43.5</text>
</g>
</svg>
</body></html>
